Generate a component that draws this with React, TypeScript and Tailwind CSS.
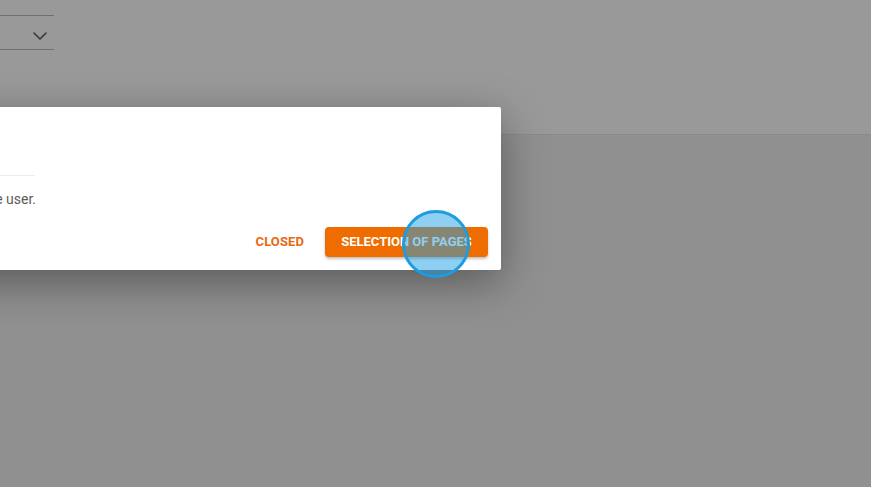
import { ChevronDown } from 'lucide-react'

export default function App() {
  return (
    <div className="relative w-[871px] h-[487px] overflow-hidden bg-[#f0f0f0] font-['Roboto',sans-serif]">
      {/* page behind the overlay */}
      <div className="h-[135px] bg-white border-b border-[#e6e6e6]">
        <div className="w-[54px] pt-[15px]">
          <div className="border-t border-[#b9b9b9]" />
          <div className="h-[34px] flex items-end justify-end pr-[2px] border-b border-[#b9b9b9]">
            <ChevronDown className="w-[24px] h-[24px] text-[#5a5a5a] mb-[1px]" strokeWidth={1.6} />
          </div>
        </div>
      </div>

      {/* backdrop */}
      <div className="absolute inset-0 bg-black/40" />

      {/* dialog */}
      <div className="absolute left-[-420px] top-[107px] w-[921px] h-[163px] bg-white rounded-[2px] shadow-[0_12px_44px_rgba(0,0,0,0.38)] flex flex-col">
        <div className="h-[69px] mx-[24px] border-b border-[#ececec] w-[431px]" />
        <div className="px-[24px] pt-[13px] flex justify-start">
          <p className="w-[432px] text-right text-[14px] text-[#5a5a5a] whitespace-nowrap">
            These pages will no longer be available for the user.
          </p>
        </div>
        <div className="flex justify-end items-center gap-[5px] pr-[13px] mt-auto mb-[13px]">
          <button className="h-[30px] px-[16px] text-[13px] font-bold text-[#e8680f] uppercase tracking-[0.1px]">
            Closed
          </button>
          <button className="h-[30px] w-[163px] rounded-[4px] bg-[#ef6c00] text-white text-[13px] font-bold uppercase shadow-[0_2px_3px_rgba(0,0,0,0.25)]">
            Selection of pages
          </button>
        </div>
      </div>

      {/* click indicator */}
      <div className="absolute left-[402px] top-[210px] w-[68px] h-[68px] rounded-full border-[3px] border-[#1b9de0] bg-[rgba(30,160,230,0.5)]" />
    </div>
  )
}
